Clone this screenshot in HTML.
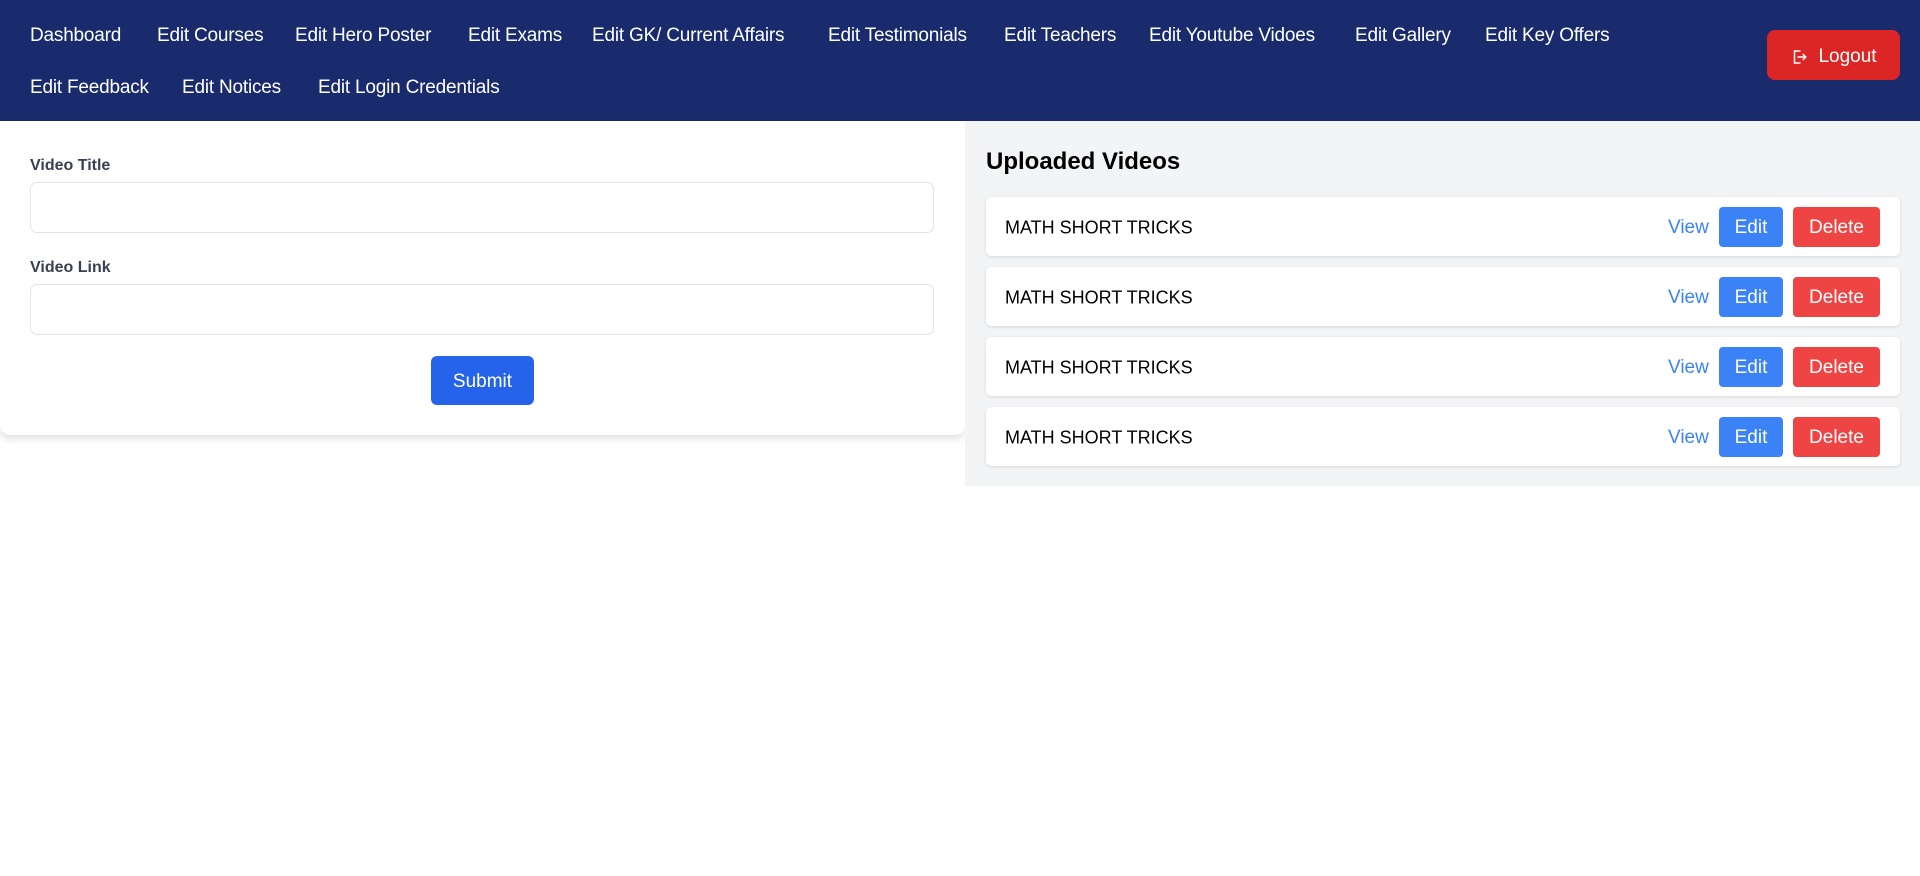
<!DOCTYPE html>
<html><head><meta charset="utf-8"><style>
*{box-sizing:border-box;margin:0;padding:0}
body{width:1920px;height:876px;background:#fff;font-family:"Liberation Sans",sans-serif;position:relative;overflow:hidden}
.nav{position:absolute;left:0;top:0;width:1920px;height:121px;background:#1a2b6d}
.nav a{position:absolute;color:#fff;font-size:19px;white-space:nowrap;transform:translateY(-50%);letter-spacing:-0.2px}
.logout{position:absolute;left:1767px;top:30px;width:133px;height:50px;background:#dc2626;border-radius:8px;color:#fff;font-size:19px;display:flex;align-items:center;justify-content:center;gap:10px;padding-top:3px}
.card{position:absolute;left:0;top:121px;width:965px;height:314px;background:#fff;border-radius:0 0 10px 10px;box-shadow:0 4px 8px rgba(0,0,0,.12)}
.lbl{position:absolute;left:30px;font-size:16px;font-weight:bold;color:#374151}
.inp{position:absolute;left:30px;width:904px;height:51px;border:1px solid #e2e4e8;border-radius:7px}
.sub{position:absolute;left:431px;top:356px;width:103px;height:49px;background:#2563eb;color:#fff;border-radius:6px;font-size:19px;display:flex;align-items:center;justify-content:center;padding-top:2px}
.right{position:absolute;left:965px;top:121px;width:955px;height:365px;background:#f3f4f6}
.h{position:absolute;left:986px;top:148px;font-size:24px;font-weight:bold;color:#000}
.row{position:absolute;left:986px;width:914px;height:59px;background:#fff;border-radius:5px;box-shadow:0 1px 3px rgba(0,0,0,.12)}
.row .t{position:absolute;left:19px;top:52%;transform:translateY(-50%);font-size:18px;color:#000}
.row .v{position:absolute;left:682px;top:52%;transform:translateY(-50%);font-size:19px;color:#3b82f6}
.row .e{position:absolute;left:733px;top:10px;width:64px;height:40px;background:#3b82f6;color:#fff;border-radius:4px;font-size:19px;display:flex;align-items:center;justify-content:center;padding-top:2px}
.row .d{position:absolute;left:807px;top:10px;width:87px;height:40px;background:#ef4444;color:#fff;border-radius:4px;font-size:19px;display:flex;align-items:center;justify-content:center;padding-top:2px}
</style></head><body>
<div class="nav">
<a style="left:30px;top:36px">Dashboard</a>
<a style="left:157px;top:36px">Edit Courses</a>
<a style="left:295px;top:36px">Edit Hero Poster</a>
<a style="left:468px;top:36px">Edit Exams</a>
<a style="left:592px;top:36px">Edit GK/ Current Affairs</a>
<a style="left:828px;top:36px">Edit Testimonials</a>
<a style="left:1004px;top:36px">Edit Teachers</a>
<a style="left:1149px;top:36px">Edit Youtube Vidoes</a>
<a style="left:1355px;top:36px">Edit Gallery</a>
<a style="left:1485px;top:36px">Edit Key Offers</a>
<a style="left:30px;top:88px">Edit Feedback</a>
<a style="left:182px;top:88px">Edit Notices</a>
<a style="left:318px;top:88px">Edit Login Credentials</a>
<div class="logout"><svg width="18" height="18" viewBox="0 0 24 24" fill="none" stroke="#fff" stroke-width="2"><path d="M14 4H6v16h8M10 12h11M17 8l4 4-4 4"/></svg>Logout</div>
</div>
<div class="card">
<div class="lbl" style="top:36px">Video Title</div>
<div class="inp" style="top:61px"></div>
<div class="lbl" style="top:138px">Video Link</div>
<div class="inp" style="top:163px"></div>
</div>
<div class="sub">Submit</div>
<div class="right"></div>
<div class="h">Uploaded Videos</div>
<div class="row" style="top:197px"><span class="t">MATH SHORT TRICKS</span><span class="v">View</span><span class="e">Edit</span><span class="d">Delete</span></div>
<div class="row" style="top:267px"><span class="t">MATH SHORT TRICKS</span><span class="v">View</span><span class="e">Edit</span><span class="d">Delete</span></div>
<div class="row" style="top:337px"><span class="t">MATH SHORT TRICKS</span><span class="v">View</span><span class="e">Edit</span><span class="d">Delete</span></div>
<div class="row" style="top:407px"><span class="t">MATH SHORT TRICKS</span><span class="v">View</span><span class="e">Edit</span><span class="d">Delete</span></div>
</body></html>
